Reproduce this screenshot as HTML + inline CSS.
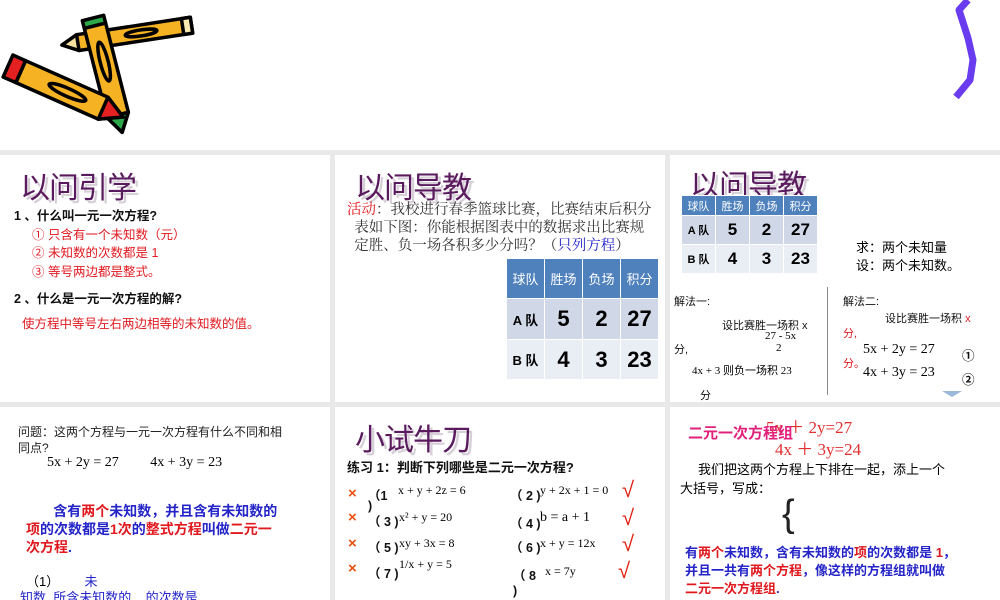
<!DOCTYPE html><html><head><meta charset="utf-8"><style>
body{margin:0;width:1000px;height:600px;overflow:hidden;background:#e9e9e9;font-family:"Liberation Sans","Noto Sans CJK SC",sans-serif;position:relative}
.p{position:absolute;background:#fff;overflow:hidden}
.a{position:absolute;white-space:nowrap}
.t{font-size:30px;color:#5a1a5e;text-shadow:3px 3px 0 #d8d0d8;font-family:"Noto Sans CJK SC",sans-serif;letter-spacing:-1px}
.s{font-size:12.5px;font-weight:bold;color:#111}
.r{color:#e0191f}.b{color:#2424c8}
.m{font-family:"Liberation Serif",serif;font-size:14px}
table{border-collapse:collapse;position:absolute}
td{border:1px solid #fff;text-align:center;font-weight:bold}
.h td{background:#4f81bd;color:#fff;font-weight:normal}
.o td{background:#d0d8e8}.e td{background:#e9edf4}
.x{color:#e85010;font-weight:bold;font-size:15px}
.c{color:#e02010;font-size:22px}
</style></head><body>
<div class="p" style="left:0;top:0;width:1000px;height:150px">
<svg width="200" height="150" viewBox="0 0 200 150" style="position:absolute;left:0;top:0">
<g stroke="#000" stroke-width="3.5" stroke-linejoin="round">
<g transform="translate(62,45) rotate(-8.7)">
<polygon points="0,0 16,-8 131,-8 131,8 16,8" fill="#f5b324"/>
<polygon points="0,0 16,-8 16,8" fill="#f7e0a0"/>
<rect x="122" y="-8" width="9" height="16" fill="#f7e9b0"/>
<ellipse cx="80" cy="0" rx="16" ry="3" fill="none"/>
</g>
<g transform="translate(93,18) rotate(75.7)">
<polygon points="0,-11 8,-11 8,11 0,11" fill="#2aa84a"/>
<polygon points="8,-11 100,-11 118,0 100,11 8,11" fill="#f5b324"/>
<polygon points="100,-11 118,0 100,11" fill="#2aa84a"/>
<ellipse cx="45" cy="0" rx="20" ry="4" fill="none"/>
</g>
<g transform="translate(8,66) rotate(23.9)">
<rect x="0" y="-12" width="14" height="24" fill="#e52020"/>
<polygon points="14,-12 104,-12 126,0 104,12 14,12" fill="#f5b324"/>
<polygon points="104,-12 126,0 104,12" fill="#e52020"/>
<ellipse cx="65" cy="0" rx="20" ry="4" fill="none"/>
</g>
</g></svg>
<svg width="50" height="110" style="position:absolute;left:950px;top:0"><path d="M18,0 L9,10 L18,38 L23,60 L20,80 L6,97" stroke="#6a3cf0" stroke-width="7" fill="none" stroke-linejoin="round"/></svg>
</div>
<!-- panel 1 -->
<div class="p" style="left:0;top:155px;width:330px;height:247px">
<div class="a t" style="left:20px;top:8px">以问引学</div>
<div class="a s" style="left:14px;top:50px">1 、什么叫一元一次方程?</div>
<div class="a s r" style="left:32px;top:69px;font-weight:normal">① 只含有一个未知数（元）</div>
<div class="a s r" style="left:32px;top:87px;font-weight:normal">② 未知数的次数都是 1</div>
<div class="a s r" style="left:32px;top:106px;font-weight:normal">③ 等号两边都是整式。</div>
<div class="a s" style="left:14px;top:133px">2 、什么是一元一次方程的解?</div>
<div class="a s r" style="left:22px;top:158px;font-weight:normal">使方程中等号左右两边相等的未知数的值。</div>
</div>
<!-- panel 2 -->
<div class="p" style="left:335px;top:155px;width:330px;height:247px">
<div class="a t" style="left:20px;top:8px">以问导教</div>
<div class="a" style="left:12px;top:46px;font-size:14.5px;line-height:18px;color:#333;font-family:'Liberation Serif','Noto Serif CJK SC',serif"><span class="r">活动</span>：我校进行春季篮球比赛，比赛结束后积分<br>&nbsp; 表如下图：你能根据图表中的数据求出比赛规<br>&nbsp; 定胜、负一场各积多少分吗？（<span class="b">只列方程</span>）</div>
<table style="left:171px;top:103px;font-size:13px">
<tr class="h" style="height:40px"><td style="width:35px">球队</td><td style="width:35px">胜场</td><td style="width:35px">负场</td><td style="width:35px">积分</td></tr>
<tr class="o" style="height:41px"><td>A 队</td><td style="font-size:22px">5</td><td style="font-size:22px">2</td><td style="font-size:22px">27</td></tr>
<tr class="e" style="height:40px"><td>B 队</td><td style="font-size:22px">4</td><td style="font-size:22px">3</td><td style="font-size:22px">23</td></tr>
</table>
</div>
<!-- panel 3 -->
<div class="p" style="left:670px;top:155px;width:330px;height:247px">
<div class="a t" style="left:20px;top:6px">以问导教</div>
<table style="left:11px;top:40px;font-size:11px">
<tr class="h" style="height:20px"><td style="width:31px">球队</td><td style="width:31px">胜场</td><td style="width:31px">负场</td><td style="width:31px">积分</td></tr>
<tr class="o" style="height:29px"><td>A 队</td><td style="font-size:17px">5</td><td style="font-size:17px">2</td><td style="font-size:17px">27</td></tr>
<tr class="e" style="height:29px"><td>B 队</td><td style="font-size:17px">4</td><td style="font-size:17px">3</td><td style="font-size:17px">23</td></tr>
</table>
<div class="a" style="left:186px;top:84px;font-size:13px;line-height:18px">求：两个未知量<br>设：两个未知数。</div>
<div style="position:absolute;left:157px;top:132px;width:1px;height:108px;background:#888"></div>
<div class="a s" style="left:4px;top:138px;font-weight:normal;font-size:11px">解法一:</div>
<div class="a s" style="left:52px;top:162px;font-weight:normal;font-size:11px">设比赛胜一场积 x</div>
<div class="a s" style="left:4px;top:186px;font-weight:normal;font-size:11px">分,</div>
<div class="a m" style="left:95px;top:175px;font-size:11px">27 - 5x<br>&nbsp; &nbsp; 2</div>
<div class="a m" style="left:22px;top:207px;font-size:11px">4x + 3 则负一场积 23</div>
<div class="a s" style="left:30px;top:232px;font-weight:normal;font-size:11px">分</div>
<div class="a s" style="left:173px;top:138px;font-weight:normal;font-size:11px">解法二:</div>
<div class="a s" style="left:215px;top:155px;font-weight:normal;font-size:11px">设比赛胜一场积 <span class="r">x</span></div>
<div class="a s r" style="left:173px;top:170px;font-weight:normal;font-size:11px">分,</div>
<div class="a m" style="left:193px;top:187px">5x + 2y = 27</div>
<div class="a s r" style="left:173px;top:200px;font-weight:normal;font-size:11px">分。</div>
<div class="a m" style="left:193px;top:210px">4x + 3y = 23</div>
<div class="a s" style="left:292px;top:190px">①</div>
<div class="a s" style="left:292px;top:214px">②</div>
<div class="a" style="left:272px;top:236px;width:0;height:0;border-left:10px solid transparent;border-right:10px solid transparent;border-top:6px solid #9bb8d8"></div>
</div>
<!-- panel 4 -->
<div class="p" style="left:0;top:407px;width:330px;height:193px">
<div class="a" style="left:18px;top:17px;font-size:12px;line-height:16px;color:#222">问题：这两个方程与一元一次方程有什么不同和相<br>同点?</div>
<div class="a m" style="left:47px;top:48px">5x + 2y = 27 &nbsp; &nbsp; &nbsp; &nbsp; 4x + 3y = 23</div>
<div class="a b" style="left:26px;top:95px;font-size:14px;font-weight:bold;line-height:18px">&nbsp; &nbsp; &nbsp; &nbsp;含有<span class="r">两个</span>未知数，并且含有未知数的<br><span class="r">项</span>的次数都是<span class="r">1次</span>的<span class="r">整式方程</span>叫做<span class="r">二元一</span><br><span class="r">次方程</span>.</div>
<div class="a" style="left:26px;top:164px;font-size:13px">（1） &nbsp; &nbsp; &nbsp; <span class="b">未</span></div>
<div class="a b" style="left:20px;top:180px;font-size:13px">知数 &nbsp;所含未知数的 &nbsp; &nbsp;的次数是</div>
</div>
<!-- panel 5 -->
<div class="p" style="left:335px;top:407px;width:330px;height:193px">
<div class="a t" style="left:20px;top:8px">小试牛刀</div>
<div class="a s" style="left:12px;top:50px;font-size:13px">练习 1：判断下列哪些是二元一次方程?</div>
<div class="a x" style="left:13px;top:78px">×</div><div class="a s" style="left:33px;top:78px">（1</div><div class="a m" style="left:63px;top:76px;font-size:12px">x + y + 2z = 6</div><div class="a s" style="left:33px;top:92px">)</div>
<div class="a x" style="left:13px;top:102px">×</div><div class="a s" style="left:33px;top:104px">（ 3 )</div><div class="a m" style="left:64px;top:103px;font-size:12px">x² + y = 20</div>
<div class="a x" style="left:13px;top:128px">×</div><div class="a s" style="left:33px;top:130px">（ 5 )</div><div class="a m" style="left:64px;top:129px;font-size:12px">xy + 3x = 8</div>
<div class="a x" style="left:13px;top:153px">×</div><div class="a s" style="left:33px;top:156px">（ 7 )</div><div class="a m" style="left:64px;top:150px;font-size:12px">1/x + y = 5</div>
<div class="a s" style="left:175px;top:78px">（ 2 )</div><div class="a m" style="left:205px;top:76px;font-size:12px">y + 2x + 1 = 0</div>
<div class="a s" style="left:175px;top:106px">（ 4 )</div><div class="a m" style="left:205px;top:103px">b = a + 1</div>
<div class="a s" style="left:175px;top:130px">（ 6 )</div><div class="a m" style="left:205px;top:129px;font-size:12px">x + y = 12x</div>
<div class="a s" style="left:178px;top:158px">（ 8 <br>)</div><div class="a m" style="left:210px;top:157px;font-size:12px">x = 7y</div>
<div class="a c" style="left:287px;top:70px">√</div>
<div class="a c" style="left:287px;top:98px">√</div>
<div class="a c" style="left:287px;top:124px">√</div>
<div class="a c" style="left:283px;top:151px">√</div>
</div>
<!-- panel 6 -->
<div class="p" style="left:670px;top:407px;width:330px;height:193px">
<div class="a" style="left:96px;top:6px;font-family:'Liberation Serif',serif;font-size:17px;color:#e03030">5x ＋ 2y=27</div>
<div class="a" style="left:18px;top:15px;font-size:15px;font-weight:bold;color:#e0207a">二元一次方程组</div>
<div class="a" style="left:105px;top:28px;font-family:'Liberation Serif',serif;font-size:17px;color:#e03030">4x ＋ 3y=24</div>
<div class="a" style="left:10px;top:53px;font-size:13px;line-height:19px">&nbsp; &nbsp; &nbsp;我们把这两个方程上下排在一起，添上一个<br>大括号，写成：</div>
<div class="a" style="left:112px;top:86px;font-size:38px;font-weight:100;color:#222">{</div>
<div class="a b" style="left:15px;top:137px;font-size:13px;font-weight:bold;line-height:18px">有<span class="r">两个</span>未知数，含有未知数的<span class="r">项</span>的次数都是 <span class="r">1</span>，<br>并且一共有<span class="r">两个方程</span>，像这样的方程组就叫做<br><span class="r">二元一次方程组</span>.</div>
</div>
</body></html>
